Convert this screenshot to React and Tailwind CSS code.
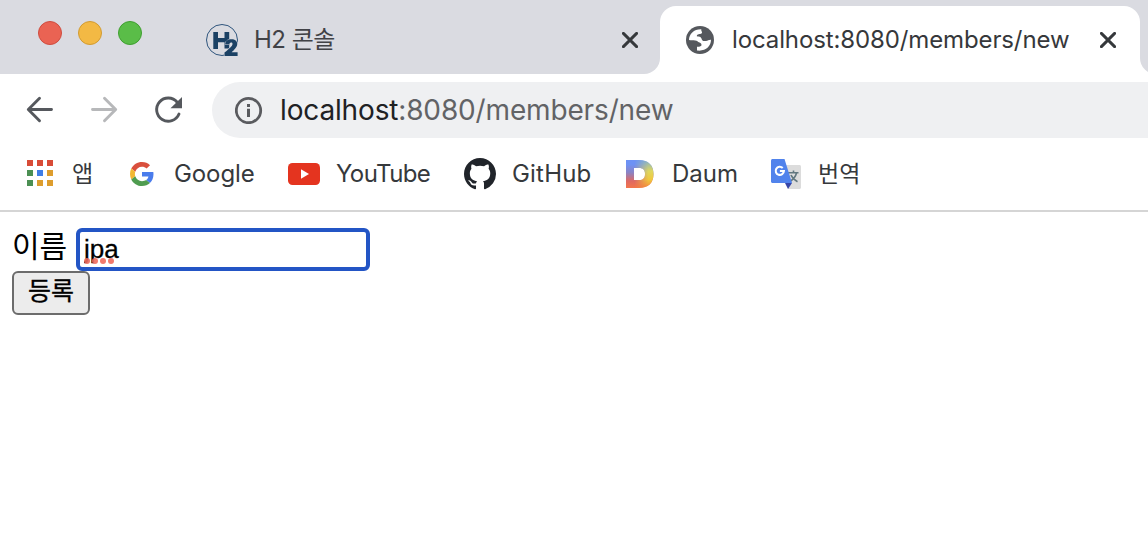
import React from 'react';

// ===================================================================
// ICONS
// ===================================================================
const H2Icon = () => (
  <svg className="w-9 h-9 shrink-0" viewBox="0 0 36 36">
    <circle cx="18" cy="18" r="15.5" fill="none" stroke="#2f557d" strokeWidth="1" />
    <path d="M9.300 10h4.700v6h6.500v-6h4.700v16.500h-4.700v-6.300H14v6.800H9.300z" fill="#1b4164" />
    <path d="M21.300 22.500c0-3.300 2.400-5.200 6.200-5.200 3.600 0 5.700 1.900 5.700 4.700 0 3.200-3 5.600-5.600 8.200h6V34H20.500v-3.400c5-4.400 8-6.600 8-8.700 0-.8-.5-1.300-1.400-1.300-1.100 0-1.600.7-1.700 1.900z" fill="#1b4164" stroke="#dadbe1" strokeWidth="1" paintOrder="stroke" />
  </svg>
);

const GlobeIcon = () => (
  <svg className="w-7 h-7 shrink-0" viewBox="0 0 28 28">
    <circle cx="14" cy="14" r="14" fill="#55585d" />
    <path d="M3 14C3 8 8 3 15.300 3.200C15 6 17 5.500 15.500 7.500C14 8.500 11 7.500 10.800 10.200C14 10.800 14.500 10.500 15.500 12.500C16.200 15.500 17.500 15.200 20 15C22 14.800 22.500 13.700 25 13.800C25 20.500 19.500 25.500 11 24.500L11 20.800C13 20.500 15 21 15.500 19C15.500 16.500 13 16.800 11.800 15.500C9.500 13.500 6 14.500 3 14z" fill="#fff" />
  </svg>
);

const CloseIcon = () => (
  <svg className="w-4 h-4 shrink-0" viewBox="0 0 16 16" fill="none" stroke="#35383b" strokeWidth="2.900" strokeLinecap="round">
    <path d="M1.400 1.400l13.200 13.200M14.600 1.400L1.400 14.600" />
  </svg>
);

const ArrowIcon = ({ flip = false, color }) => (
  <svg className={`w-7 h-7 shrink-0 ${flip ? '-scale-x-100' : ''}`} viewBox="0 0 28 28" fill="none" stroke={color} strokeWidth="2.900" strokeLinecap="round" strokeLinejoin="round">
    <path d="M25.500 13.500H2.500M13.500 2.300L2.300 13.500 13.500 24.700" />
  </svg>
);

const ReloadIcon = () => (
  <svg className="w-7 h-7 shrink-0" viewBox="0 0 28 28">
    <path d="M23.200 6.200A11.600 11.600 0 1 0 25 18" fill="none" stroke="#55585d" strokeWidth="2.900" strokeLinecap="round" />
    <path d="M28 1v11.200H16.500z" fill="#55585d" />
  </svg>
);

const InfoIcon = () => (
  <svg className="w-7 h-7 shrink-0 translate-x-px" viewBox="0 0 28 28">
    <circle cx="13.500" cy="14.500" r="12.200" fill="none" stroke="#5a5b5f" strokeWidth="2.800" />
    <path d="M12 8h3v3h-3zM12 12.800h3v8.200h-3z" fill="#5a5b5f" />
  </svg>
);

const APP_DOTS = [
  'bg-[#d84b37]', 'bg-[#d84b37]', 'bg-[#d84b37]',
  'bg-[#4b8f53]', 'bg-[#3f7ee8]', 'bg-[#dd9d2e]',
  'bg-[#4b8f53]', 'bg-[#dd9d2e]', 'bg-[#dd9d2e]',
];

const AppsIcon = () => (
  <div className="grid grid-cols-3 gap-1 w-[26px] shrink-0 -translate-y-px">
    {APP_DOTS.map((color, i) => (
      <span key={i} className={`w-1.5 h-1.5 ${color}`} />
    ))}
  </div>
);

const GoogleIcon = () => (
  <svg className="w-6 h-6 shrink-0" viewBox="0 0 48 48">
    <path fill="#d94f3d" d="M24 9.500c3.540 0 6.710 1.220 9.210 3.600l6.850-6.850C35.900 2.380 30.470 0 24 0 14.620 0 6.510 5.380 2.560 13.220l7.980 6.190C12.430 13.720 17.740 9.500 24 9.500z" />
    <path fill="#4a7cec" d="M46.980 24.550c0-1.570-.15-3.090-.38-4.550H24v9.020h12.940c-.58 2.960-2.260 5.480-4.780 7.180l7.730 6c4.510-4.180 7.090-10.360 7.090-17.650z" />
    <path fill="#f2b832" d="M10.530 28.590c-.48-1.450-.76-2.990-.76-4.590s.27-3.140.76-4.590l-7.980-6.190C.92 16.460 0 20.120 0 24c0 3.880.92 7.540 2.560 10.780l7.970-6.190z" />
    <path fill="#4f9c50" d="M24 48c6.480 0 11.930-2.130 15.890-5.810l-7.730-6c-2.150 1.450-4.920 2.300-8.160 2.300-6.260 0-11.570-4.220-13.470-9.910l-7.980 6.190C6.510 42.620 14.620 48 24 48z" />
  </svg>
);

const YouTubeIcon = () => (
  <svg className="w-8 h-[22px] shrink-0" viewBox="0 0 32 22">
    <rect width="32" height="22" rx="4.500" fill="#e4341f" />
    <path d="M13 6.200v9.600l8-4.800z" fill="#fff" />
  </svg>
);

const GitHubIcon = () => (
  <svg className="w-8 h-8 shrink-0" viewBox="0 0 16 16" fill="#20242a">
    <path d="M8 0C3.580 0 0 3.580 0 8c0 3.540 2.290 6.530 5.470 7.590.4.070.55-.17.55-.38 0-.19-.01-.82-.01-1.490-2.010.37-2.530-.49-2.690-.94-.09-.23-.48-.94-.82-1.130-.28-.15-.68-.52-.01-.53.63-.01 1.080.58 1.230.82.720 1.210 1.870.87 2.330.66.070-.52.28-.87.510-1.070-1.780-.2-3.640-.89-3.640-3.950 0-.87.310-1.590.820-2.150-.08-.2-.36-1.020.08-2.120 0 0 .67-.21 2.200.82.640-.18 1.320-.27 2-.27s1.360.09 2 .27c1.530-1.040 2.200-.82 2.200-.82.440 1.100.160 1.920.080 2.120.510.560.820 1.270.820 2.150 0 3.070-1.870 3.750-3.650 3.950.290.250.540.730.540 1.480 0 1.070-.01 1.930-.01 2.200 0 .21.150.46.550.38A8.010 8.010 0 0 0 16 8c0-4.420-3.580-8-8-8z" />
  </svg>
);

const DaumIcon = () => (
  <svg className="w-7 h-7 shrink-0" viewBox="0 0 28 28">
    <defs>
      <linearGradient id="daumLeft" x1="0" y1="0" x2="0" y2="1">
        <stop offset="0.150" stopColor="#6d92f5" />
        <stop offset="0.450" stopColor="#8b83c4" />
        <stop offset="0.750" stopColor="#df6963" />
        <stop offset="1" stopColor="#f3764b" />
      </linearGradient>
      <linearGradient id="daumRight" x1="0" y1="0" x2="0" y2="1">
        <stop offset="0" stopColor="#85b2c9" />
        <stop offset="0.400" stopColor="#dfd75e" />
        <stop offset="0.700" stopColor="#f0c83e" />
        <stop offset="1" stopColor="#f28b3c" />
      </linearGradient>
      <linearGradient id="daumFade">
        <stop offset="0.300" stopColor="#fff" stopOpacity="0" />
        <stop offset="0.800" stopColor="#fff" />
      </linearGradient>
      <mask id="daumMask">
        <rect width="28" height="28" fill="url(#daumFade)" />
      </mask>
    </defs>
    <path d="M0 0h13c9 0 14.500 5 14.500 14s-5.500 14-14.500 14H0zM8 8v12h5c4 0 6-2 6-6S17 8 13 8z" fillRule="evenodd" fill="url(#daumLeft)" />
    <path d="M0 0h13c9 0 14.500 5 14.500 14s-5.500 14-14.500 14H0zM8 8v12h5c4 0 6-2 6-6S17 8 13 8z" fillRule="evenodd" fill="url(#daumRight)" mask="url(#daumMask)" />
  </svg>
);

const TranslateIcon = () => (
  <svg className="w-[30px] h-[30px] shrink-0" viewBox="0 0 30 30">
    <path d="M12 6h16.500c.8 0 1.500.7 1.500 1.500v21c0 .8-.7 1.500-1.500 1.500H17z" fill="#dcdcdc" />
    <path d="M17 13.800h10.500M22.500 11.500v2M25.500 14c-.8 3.500-3.500 6.500-6.500 8.500M20 16c1 2.500 3.500 5 6.500 6.700" fill="none" stroke="#61777f" strokeWidth="1.600" />
    <path d="M14 24h7l-4 6z" fill="#3746a8" />
    <path d="M1.500 0H13.500l7.500 24H1.500C.7 24 0 23.300 0 22.500v-21C0 .7.7 0 1.500 0z" fill="#5183ec" />
    <path d="M11.700 8.900A4.100 4.100 0 1 0 12.900 12H8.900" fill="none" stroke="#fff" strokeWidth="2.100" />
  </svg>
);

// ===================================================================
// TAB STRIP
// ===================================================================
const TabStrip = () => (
  <div className="flex h-[74px] bg-[#dadbe1]">
    <div className="flex gap-4 pl-[38px] pt-[21px] w-[204px] shrink-0">
      <span className="w-6 h-6 rounded-full bg-[#ea6353] border border-[#cf4c3f]" />
      <span className="w-6 h-6 rounded-full bg-[#f3b944] border border-[#d29b31]" />
      <span className="w-6 h-6 rounded-full bg-[#5abd48] border border-[#3f9f30]" />
    </div>

    {/* Inactive tab */}
    <div className="flex-1 bg-white">
      <div className="flex items-center h-full pb-1.5 pr-[22px] rounded-br-[16px] bg-[#dadbe1]">
        <div className="flex items-center w-full pt-3">
          <H2Icon />
          <span className="ml-[14px] flex-1 text-[24px] leading-8 tracking-[-0.5px] text-[#414246]">H2 콘솔</span>
          <CloseIcon />
        </div>
      </div>
    </div>

    {/* Active tab */}
    <div className="w-[480px] shrink-0 pt-1.5">
      <div className="flex items-center h-full rounded-t-[16px] bg-white pl-[26px] pr-6">
        <GlobeIcon />
        <span className="ml-[18px] flex-1 text-[24px] leading-8 tracking-[-0.12px] text-[#36383b]">localhost:8080/members/new</span>
        <CloseIcon />
      </div>
    </div>
    <div className="w-2 shrink-0 bg-white overflow-hidden">
      <div className="w-10 h-full rounded-bl-[16px] bg-[#dadbe1]" />
    </div>
  </div>
);

// ===================================================================
// TOOLBAR
// ===================================================================
const Toolbar = () => (
  <div className="flex items-center h-[72px] pl-[26px]">
    <div className="flex items-center gap-9 w-[186px] shrink-0">
      <ArrowIcon color="#55585d" />
      <ArrowIcon color="#b7b8ba" flip />
      <ReloadIcon />
    </div>
    <div className="flex items-center flex-1 h-14 rounded-l-full bg-[#eff0f2] pl-[22px]">
      <InfoIcon />
      <span className="ml-[18px] text-[28px] leading-9 tracking-[-0.15px] text-[#626366]">
        <span className="text-[#202124]">localhost</span>:8080/members/new
      </span>
    </div>
  </div>
);

// ===================================================================
// BOOKMARKS BAR
// ===================================================================
const BOOKMARKS = [
  { label: '앱', icon: AppsIcon, box: 'w-[103px]', text: 'ml-[19px] text-[23px]' },
  { label: 'Google', icon: GoogleIcon, box: 'w-[158px]', text: 'ml-5 text-[24px] tracking-[-0.1px]' },
  { label: 'YouTube', icon: YouTubeIcon, box: 'w-[176px]', text: 'ml-4 text-[24px] tracking-[-0.6px]' },
  { label: 'GitHub', icon: GitHubIcon, box: 'w-[162px]', text: 'ml-4 text-[24px] tracking-[0.2px]' },
  { label: 'Daum', icon: DaumIcon, box: 'w-[145px]', text: 'ml-[18px] text-[24px]' },
  { label: '번역', icon: TranslateIcon, box: 'w-[100px]', text: 'ml-[17px] text-[23px]' },
];

const BookmarksBar = () => (
  <div className="flex items-center h-[66px] pl-[27px] pb-2 border-b-2 border-[#d5d5d5]">
    {BOOKMARKS.map(({ label, icon: Icon, box, text }) => (
      <a key={label} className={`flex items-center shrink-0 ${box}`}>
        <Icon />
        <span className={`leading-8 text-[#36393c] ${text}`}>{label}</span>
      </a>
    ))}
  </div>
);

// ===================================================================
// PAGE — member registration form
// ===================================================================
const MemberForm = () => (
  <form className="pl-3 pt-4 font-['Liberation_Sans','Noto_Sans_CJK_KR',sans-serif] text-black">
    <div className="flex h-[43px]">
      <label htmlFor="name" className="w-16 pt-px text-[30px] leading-9">이름</label>
      <div className="relative">
        <input
          id="name"
          defaultValue="jpa"
          spellCheck={false}
          className="block w-[294px] h-[43px] border-4 border-[#2355c5] rounded-md bg-white pl-1 text-[26px] outline-none [-webkit-text-stroke:0.3px_black]"
        />
        {/* Spelling marker */}
        <div className="absolute left-2 top-[30px] flex gap-0.5">
          {[0, 1, 2, 3].map((i) => (
            <span key={i} className="w-1.5 h-1.5 rounded-full bg-[#ee6a5c]/90" />
          ))}
        </div>
      </div>
    </div>
    <button
      type="button"
      className="block w-[78px] h-11 border-2 border-[#6c6c6c] rounded-md bg-[#ececec] pb-1 text-[25px] leading-9 [-webkit-text-stroke:0.3px_black]"
    >
      등록
    </button>
  </form>
);

const App = () => (
  <div className="h-[538px] bg-white overflow-hidden font-['Inter','Noto_Sans_CJK_KR',sans-serif] whitespace-nowrap">
    <TabStrip />
    <Toolbar />
    <BookmarksBar />
    <MemberForm />
  </div>
);

export default App;
